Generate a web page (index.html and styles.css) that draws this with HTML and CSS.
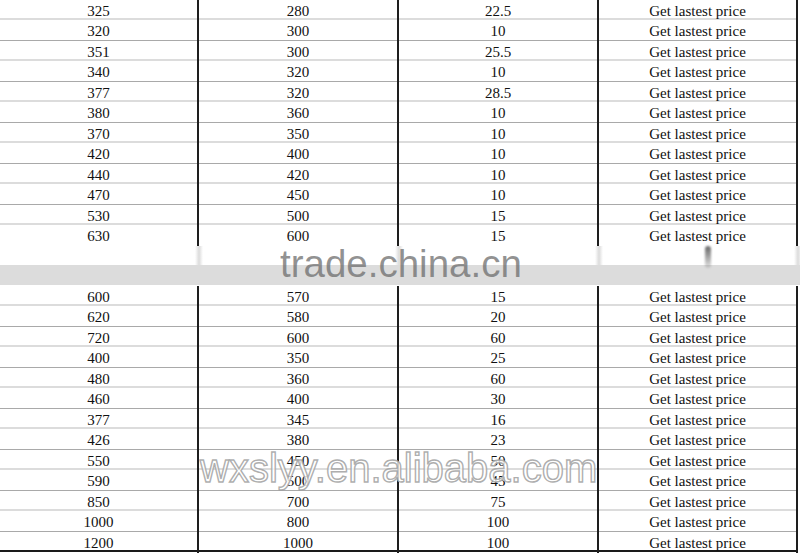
FILE: index.html
```html
<!DOCTYPE html>
<html>
<head>
<meta charset="utf-8">
<link rel="stylesheet" href="styles.css">
</head>
<body>
<div class="page">
  <div class="sheet top">
    <div class="row"><div class="c">325</div><div class="c">280</div><div class="c">22.5</div><div class="c">Get lastest price</div></div>
    <div class="row"><div class="c">320</div><div class="c">300</div><div class="c">10</div><div class="c">Get lastest price</div></div>
    <div class="row"><div class="c">351</div><div class="c">300</div><div class="c">25.5</div><div class="c">Get lastest price</div></div>
    <div class="row"><div class="c">340</div><div class="c">320</div><div class="c">10</div><div class="c">Get lastest price</div></div>
    <div class="row"><div class="c">377</div><div class="c">320</div><div class="c">28.5</div><div class="c">Get lastest price</div></div>
    <div class="row"><div class="c">380</div><div class="c">360</div><div class="c">10</div><div class="c">Get lastest price</div></div>
    <div class="row"><div class="c">370</div><div class="c">350</div><div class="c">10</div><div class="c">Get lastest price</div></div>
    <div class="row"><div class="c">420</div><div class="c">400</div><div class="c">10</div><div class="c">Get lastest price</div></div>
    <div class="row"><div class="c">440</div><div class="c">420</div><div class="c">10</div><div class="c">Get lastest price</div></div>
    <div class="row"><div class="c">470</div><div class="c">450</div><div class="c">10</div><div class="c">Get lastest price</div></div>
    <div class="row"><div class="c">530</div><div class="c">500</div><div class="c">15</div><div class="c">Get lastest price</div></div>
    <div class="row last"><div class="c">630</div><div class="c">600</div><div class="c">15</div><div class="c">Get lastest price</div></div>
  </div>
  <div class="gap">
    <div class="g"></div><div class="g"></div><div class="g"></div><div class="g"></div>
  </div>
  <div class="band"></div>
  <div class="sheet bottom">
    <div class="row"><div class="c">600</div><div class="c">570</div><div class="c">15</div><div class="c">Get lastest price</div></div>
    <div class="row"><div class="c">620</div><div class="c">580</div><div class="c">20</div><div class="c">Get lastest price</div></div>
    <div class="row"><div class="c">720</div><div class="c">600</div><div class="c">60</div><div class="c">Get lastest price</div></div>
    <div class="row"><div class="c">400</div><div class="c">350</div><div class="c">25</div><div class="c">Get lastest price</div></div>
    <div class="row"><div class="c">480</div><div class="c">360</div><div class="c">60</div><div class="c">Get lastest price</div></div>
    <div class="row"><div class="c">460</div><div class="c">400</div><div class="c">30</div><div class="c">Get lastest price</div></div>
    <div class="row"><div class="c">377</div><div class="c">345</div><div class="c">16</div><div class="c">Get lastest price</div></div>
    <div class="row"><div class="c">426</div><div class="c">380</div><div class="c">23</div><div class="c">Get lastest price</div></div>
    <div class="row"><div class="c">550</div><div class="c">450</div><div class="c">50</div><div class="c">Get lastest price</div></div>
    <div class="row"><div class="c">590</div><div class="c">500</div><div class="c">45</div><div class="c">Get lastest price</div></div>
    <div class="row"><div class="c">850</div><div class="c">700</div><div class="c">75</div><div class="c">Get lastest price</div></div>
    <div class="row"><div class="c">1000</div><div class="c">800</div><div class="c">100</div><div class="c">Get lastest price</div></div>
    <div class="row final"><div class="c">1200</div><div class="c">1000</div><div class="c">100</div><div class="c">Get lastest price</div></div>
  </div>
  <div class="smudge"></div>
  <div class="wm-trade">trade.china.cn</div>
  <div class="wm-ali">wxslyy.en.alibaba.com</div>
</div>
</body>
</html>
```

FILE: styles.css
```css
html, body {
  margin: 0;
  padding: 0;
  background: #ffffff;
}

.page {
  position: relative;
  width: 800px;
  height: 556px;
  overflow: hidden;
  font-family: "Liberation Serif", "Times New Roman", serif;
  color: #111111;
}

.sheet {
  width: 798px;
}

.top {
  margin-top: -0.5px;
}

.row {
  display: grid;
  grid-template-columns: 199px 200px 200px 199px;
  height: 20.5px;
  box-sizing: border-box;
  border-bottom: 1px solid #a9a9a9;
}

.row:nth-child(odd) {
  border-bottom: 2px solid #dcdcdc;
}

.row.last {
  border-bottom: none;
}

.row.final {
  border-bottom: 2px solid #1a1a1a;
}

.c {
  box-sizing: border-box;
  border-right: 2px solid #1e1e1e;
  text-align: center;
  font-size: 15px;
  line-height: 20px;
  padding-top: 1px;
  white-space: nowrap;
}

.gap {
  display: grid;
  grid-template-columns: 199px 200px 200px 199px;
  width: 798px;
  height: 19.5px;
}

.g {
  position: relative;
}

.g::after {
  content: "";
  position: absolute;
  right: -4px;
  top: 0;
  width: 8px;
  height: 100%;
  background: linear-gradient(to right, rgba(0,0,0,0), rgba(0,0,0,0.14), rgba(0,0,0,0));
}

.band {
  height: 20px;
  background: #dcdcdc;
}

.bottom {
  margin-top: 0.5px;
}

.smudge {
  position: absolute;
  left: 705px;
  top: 246px;
  width: 6px;
  height: 22px;
  border-radius: 3px;
  background: linear-gradient(to bottom, rgba(40,40,40,0.7), rgba(120,120,120,0.2));
  filter: blur(1px);
}

.wm-trade {
  position: absolute;
  left: 280px;
  top: 242px;
  font-family: "Liberation Sans", Arial, sans-serif;
  font-size: 38.5px;
  line-height: 44px;
  color: rgba(110, 110, 110, 0.75);
  white-space: nowrap;
}

.wm-ali {
  position: absolute;
  left: 200px;
  top: 446px;
  font-family: "Liberation Sans", Arial, sans-serif;
  font-size: 40px;
  line-height: 44px;
  color: rgba(255, 255, 255, 0.8);
  -webkit-text-stroke: 1.4px rgba(160, 160, 160, 0.85);
  white-space: nowrap;
}
```
